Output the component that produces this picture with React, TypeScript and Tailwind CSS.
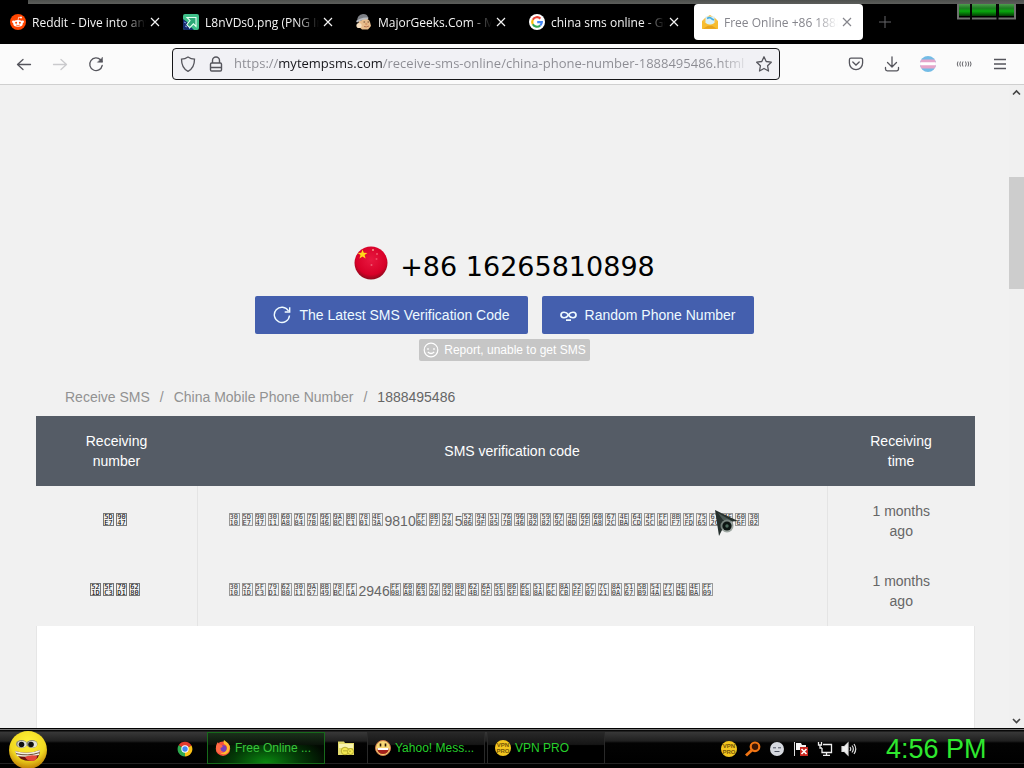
import React from "react";

const UI = "font-['Open_Sans',sans-serif]";

function CloseIcon() {
  return (
    <svg width="10" height="10" viewBox="0 0 10 10" stroke="currentColor" strokeWidth="1.2" fill="none">
      <path d="M1 1l8 8M9 1L1 9" />
    </svg>
  );
}

function RedditIcon() {
  return (
    <svg width="16" height="16" viewBox="0 0 16 16">
      <circle cx="8" cy="8" r="8" fill="#ff4500" />
      <ellipse cx="8" cy="9.4" rx="4.8" ry="3.3" fill="#fff" />
      <circle cx="3.3" cy="7.8" r="1.2" fill="#fff" />
      <circle cx="12.7" cy="7.8" r="1.2" fill="#fff" />
      <circle cx="11" cy="3.6" r="1" fill="#fff" />
      <path d="M8 6.2l.7-3 2.2.4" stroke="#fff" strokeWidth=".7" fill="none" />
      <circle cx="6.1" cy="8.8" r="1" fill="#ff4500" />
      <circle cx="9.9" cy="8.8" r="1" fill="#ff4500" />
      <path d="M6 11q2 1.2 4 0" stroke="#ff4500" strokeWidth=".7" fill="none" />
    </svg>
  );
}

function ArrowPicIcon() {
  return (
    <svg width="16" height="16" viewBox="0 0 16 16">
      <rect width="16" height="16" rx="2" fill="#3fc08a" />
      <path d="M0 5l4 3 3 4 4 4H2a2 2 0 0 1-2-2z" fill="#142a6a" />
      <path d="M4 3.5h9v9l-2.6-2.6-3.6 3.8-3-3L7 6.5z" fill="#2aa876" stroke="#e4fff2" strokeWidth="1.1" />
      <path d="M1 8l2 1M2 12l2 1M6 14l1 1" stroke="#7f9cf0" />
    </svg>
  );
}

function GeekIcon() {
  return (
    <svg width="16" height="16" viewBox="0 0 16 16">
      <path d="M3 6q9-4 11 2l1 4-3 3.500H6L2 12z" fill="#e8bd8c" />
      <path d="M1 7Q1 1 7 0q5 0 5 4-5 0-7 3z" fill="#7d8086" />
      <path d="M0 7q6-4.500 12.500-3.400l-.5 1.600Q6 5 1 8.600z" fill="#b9bcc1" />
      <path d="M7.500 8h1.600M11.500 8h1.600" stroke="#6b4a30" strokeWidth="1" />
      <path d="M8 12.500q2.500 1 5-.5" stroke="#b06a4a" strokeWidth=".9" fill="none" />
      <circle cx="3" cy="11.500" r="2.600" fill="#f6dfc0" />
      <circle cx="10.300" cy="10" r="1.200" fill="#d79b6c" />
    </svg>
  );
}

function GoogleIcon() {
  return (
    <svg width="16" height="16" viewBox="0 0 16 16">
      <circle cx="8" cy="8" r="8" fill="#fff" />
      <g fill="none" strokeWidth="2.200">
        <path d="M11.400 4.600A4.800 4.800 0 0 0 3.800 5.700" stroke="#ea4335" />
        <path d="M3.800 5.700a4.800 4.800 0 0 0 0 4.600" stroke="#fbbc05" />
        <path d="M3.800 10.300a4.800 4.800 0 0 0 7.400 1.200" stroke="#34a853" />
        <path d="M11.200 11.500A4.800 4.800 0 0 0 12.800 8.200H8.200" stroke="#4285f4" />
      </g>
    </svg>
  );
}

function EnvelopeIcon() {
  return (
    <svg width="16" height="14" viewBox="0 0 16 14">
      <path d="M0 6l3-3 5-3 5 3 3 3v8H0z" fill="#f7c145" />
      <path d="M3.500 1.500h9V8l-4.500 2.500L3.500 8z" fill="#d8f1fb" />
      <path d="M5 3.500q3-2 5 .5l2 1" stroke="#48aee0" strokeWidth="1.600" fill="none" />
      <path d="M0 6l5.500 3.500h5L16 6v6.500a1.500 1.500 0 0 1-1.500 1.500h-13A1.500 1.500 0 0 1 0 12.500z" fill="#f7bd30" />
      <path d="M1 13.800l5-3h4l5 3" fill="#e6a21c" />
    </svg>
  );
}

const tabs = [
  { title: "Reddit - Dive into anything", icon: <RedditIcon /> },
  { title: "L8nVDs0.png (PNG Image, 1024 × 768)", icon: <ArrowPicIcon /> },
  { title: "MajorGeeks.Com - MajorGeeks", icon: <GeekIcon /> },
  { title: "china sms online - Google Search", icon: <GoogleIcon /> },
  { title: "Free Online +86 1888495486", icon: <EnvelopeIcon />, active: true },
];

function TabBar() {
  return (
    <header className={`relative flex h-11 shrink-0 flex-col bg-black text-[12px] ${UI}`}>
      <div className="ml-7 h-1 shrink-0 bg-gradient-to-b from-[#4d504d] to-[#5c5e5b]" />
      <nav className="flex gap-1" aria-label="Tabs">
        {tabs.map((t) => (
          <div
            key={t.title}
            className={
              t.active
                ? "flex h-9 w-[169px] items-center rounded-[4px] bg-white px-2 text-[#85858c]"
                : "flex h-9 w-[169px] items-center px-2 text-[#f4f4f4] first:ml-0.5"
            }
          >
            <span className="flex w-[22px] shrink-0">{t.icon}</span>
            <a
              href="#tab"
              className="w-[114px] overflow-hidden pt-0.5 whitespace-nowrap [mask-image:linear-gradient(90deg,#000_80%,transparent)]"
            >
              {t.title}
            </a>
            <button aria-label={`Close ${t.title}`} className="ml-1 flex">
              <CloseIcon />
            </button>
          </div>
        ))}
        <button aria-label="New tab" className="ml-3 flex items-center text-[#66666a]">
          <svg width="12" height="12" viewBox="0 0 12 12" stroke="currentColor">
            <path d="M6 0v12M0 6h12" />
          </svg>
        </button>
      </nav>
      <svg className="absolute top-1 right-2" width="59" height="17" viewBox="0 0 59 17">
        <defs>
          <linearGradient id="bar" x2="0" y2="1">
            <stop offset="0" stopColor="#4e9c4e" />
            <stop offset=".35" stopColor="#1d7d22" />
            <stop offset=".6" stopColor="#08a70d" />
            <stop offset="1" stopColor="#033c04" />
          </linearGradient>
        </defs>
        <path d="M1 0v14.500h57V0" fill="none" stroke="#6f716f" strokeWidth="2" />
        <path d="M2 0h11v12H2zM15 0h24v12H15zM42 0h15v12H42z" fill="url(#bar)" />
        <path d="M14 0v16M40.500 0v16" stroke="#050505" strokeWidth="2" />
      </svg>
    </header>
  );
}

function Toolbar() {
  return (
    <div className={`flex h-[41px] shrink-0 items-center border-b border-[#cfcfcf] bg-[#fbfbfb] pr-4 pl-4 text-[#55555c] ${UI}`}>
      <div className="flex w-[156px] items-center gap-5">
        <button aria-label="Back">
          <svg width="16" height="16" viewBox="0 0 16 16" fill="none" stroke="currentColor" strokeWidth="1.300" strokeLinecap="round" strokeLinejoin="round">
            <path d="M14.500 8.500h-13M7 3.500l-5.500 5L7 13.500" />
          </svg>
        </button>
        <button aria-label="Forward" className="text-[#cacacd]">
          <svg width="16" height="16" viewBox="0 0 16 16" fill="none" stroke="currentColor" strokeWidth="1.300" strokeLinecap="round" strokeLinejoin="round">
            <path d="M1.500 8.500h13M9 3.500l5.500 5-5.500 5" />
          </svg>
        </button>
        <button aria-label="Reload">
          <svg width="16" height="16" viewBox="0 0 16 16" fill="none" stroke="currentColor" strokeWidth="1.300" strokeLinecap="round">
            <path d="M14.200 9.500A6.300 6.300 0 1 1 12.700 4L14 5.500" />
            <path d="M14.500 1.500v4.800H9.700z" fill="currentColor" strokeWidth=".5" />
          </svg>
        </button>
      </div>
      <div className="flex h-8 min-w-0 flex-[608] items-center rounded-[4px] border border-[#151518] bg-[#f1f1f5] px-[7px]">
        <svg width="16" height="16" viewBox="0 0 16 16" fill="none" stroke="currentColor" strokeWidth="1.300" className="shrink-0">
          <path d="M8 1q3 2 6.500 2.200Q14.500 12 8 15.300 1.500 12 1.500 3.200 5 3 8 1z" />
        </svg>
        <svg width="16" height="16" viewBox="0 0 16 16" fill="none" stroke="currentColor" strokeWidth="1.400" className="ml-3 shrink-0">
          <rect x="2.500" y="7" width="11" height="8" rx="1.200" />
          <path d="M4.500 7V4.500a3.500 3.500 0 0 1 7 0V7M3 11.500h10" />
        </svg>
        <input
          aria-label="Address"
          readOnly
          value="https://mytempsms.com/receive-sms-online/china-phone-number-1888495486.html"
          className="ml-[10px] min-w-0 flex-1 bg-[linear-gradient(90deg,#8b8b92_0_45px,#17171c_45px_148px,#8b8b92_148px_485px,transparent_516px)] bg-clip-text text-[13px] text-transparent outline-none"
        />
        <button aria-label="Bookmark" className="ml-2 shrink-0">
          <svg width="16" height="16" viewBox="0 0 16 16" fill="none" stroke="currentColor" strokeWidth="1.300" strokeLinejoin="round">
            <path d="M8 .8l2.200 4.700 5.100.7-3.700 3.600.9 5.200L8 12.500 3.500 15l.9-5.200L.7 6.200l5.100-.7z" />
          </svg>
        </button>
      </div>
      <div className="flex min-w-[228px] flex-[228] items-center justify-end gap-5">
        <button aria-label="Save to Pocket">
          <svg width="16" height="16" viewBox="0 0 16 16" fill="none" stroke="currentColor" strokeWidth="1.300" strokeLinecap="round">
            <path d="M3 2.200h10a1.600 1.600 0 0 1 1.600 1.600V7a6.600 6.600 0 0 1-13.200 0V3.800A1.600 1.600 0 0 1 3 2.200z" />
            <path d="M4.800 6L8 9l3.200-3" />
          </svg>
        </button>
        <button aria-label="Downloads">
          <svg width="16" height="16" viewBox="0 0 16 16" fill="none" stroke="currentColor" strokeWidth="1.300" strokeLinecap="round" strokeLinejoin="round">
            <path d="M8 .8v10M3.500 6.500L8 11l4.500-4.500M1.500 11.500V13A1.800 1.800 0 0 0 3.300 14.800h9.400A1.800 1.800 0 0 0 14.500 13v-1.500" />
          </svg>
        </button>
        <button aria-label="Profile">
          <svg width="16" height="16" viewBox="0 0 16 16">
            <clipPath id="disc"><circle cx="8" cy="8" r="8" /></clipPath>
            <g clipPath="url(#disc)">
              <path fill="#73bce6" d="M0 0h16v16H0z" />
              <path fill="#e6a5ca" d="M0 3.400h16v9H0z" />
              <path fill="#fff" d="M0 6.300h16v3H0z" />
            </g>
          </svg>
        </button>
        <button aria-label="Sound extension">
          <svg width="16" height="16" viewBox="0 0 16 16" fill="none" stroke="#66666b" strokeWidth="1">
            <path d="M2 5.500q-1.500 2.500 0 5M4.500 5.500q-1.500 2.500 0 5M7 5.500q-1.500 2.500 0 5M9.500 5.500q1.500 2.500 0 5M12 5.500q1.500 2.500 0 5M14.300 5.500q1.500 2.500 0 5" />
          </svg>
        </button>
        <button aria-label="Menu">
          <svg width="16" height="16" viewBox="0 0 16 16" stroke="currentColor" strokeWidth="1.300">
            <path d="M2 3.500h12M2 8h12M2 12.500h12" />
          </svg>
        </button>
      </div>
    </div>
  );
}

/* Shows every non-Latin character as a box holding its code point in hex. */
function CodeBoxes({ text, strong = false }: { text: string; strong?: boolean }) {
  return (
    <span className={strong ? "flex h-6 items-start justify-center pt-1" : "flex h-6 items-start pt-1"}>
      {Array.from(text).map((ch, i) => {
        const code = ch.codePointAt(0) ?? 0;
        if (code < 128) {
          return (
            <span key={i} className="leading-4">
              {ch}
            </span>
          );
        }
        return (
          <span
            key={i}
            className={`mr-0.5 flex h-[13px] w-[11px] items-center justify-center border font-['DejaVu_Sans_Mono',monospace] text-[7px] leading-[6px] ${
              strong ? "border-[#777] text-black" : "border-[#999] text-[#333]"
            }`}
          >
            <span className="w-[9px] text-left break-all whitespace-normal">
              {code.toString(16).toUpperCase()}
            </span>
          </span>
        );
      })}
    </span>
  );
}

const messages = [
  {
    from: "巧遇",
    body: "【巧遇】您的登陆验证码为9810，请在5分钟内登陆。如果不是您本人操作，请忽略本信息。",
  },
  {
    from: "初心科技",
    body: "【初心科技】驗證碼：2946（您正在進行手機帳號注冊，請勿將簡訊內容告知他人）",
  },
];

function FlagBall() {
  return (
    <svg width="34" height="34" viewBox="0 0 34 34">
      <defs>
        <radialGradient id="ball" cx=".5" cy=".4" r=".6">
          <stop offset="0" stopColor="#e81840" />
          <stop offset=".75" stopColor="#d80028" />
          <stop offset="1" stopColor="#8c0a1c" />
        </radialGradient>
      </defs>
      <circle cx="17" cy="17" r="16.500" fill="url(#ball)" />
      <path d="M8.500 3.500l1.300 3.300 3.600.1-2.800 2.200 1 3.500-3.100-2-3 2 1-3.500-2.800-2.200 3.600-.1z" fill="#ffda1a" />
      <circle cx="19" cy="4" r="1" fill="#f59a8a" />
      <circle cx="23" cy="8" r="1" fill="#f0566a" />
      <circle cx="22.500" cy="13" r="1" fill="#ee4c62" />
      <circle cx="17.500" cy="19" r="1" fill="#ee5a70" />
    </svg>
  );
}

function Page() {
  return (
    <main className="flex min-w-0 flex-1 flex-col overflow-hidden pr-[34px] pl-9 font-['Liberation_Sans',Arial,sans-serif] text-[14px] leading-5">
      <section className="flex flex-col items-center pt-[161px] pr-0.5">
        <div className="flex h-[35px] items-start gap-3">
          <FlagBall />
          <h1 className="pt-[5px] font-['DejaVu_Sans',sans-serif] text-[27px] leading-8 text-black">+86 16265810898</h1>
        </div>
        <div className="mt-[15px] flex gap-[14px] text-[#eefaff]">
          <button className="flex h-[38px] items-center gap-2 rounded-[2px] bg-[#445fae] px-[18px]">
            <svg width="18" height="18" viewBox="0 0 18 18" fill="none" stroke="currentColor" strokeWidth="1.400">
              <path d="M16.500 9.500A7.600 7.600 0 1 1 15.500 5M16.700 1.200V6h-5" />
            </svg>
            The Latest SMS Verification Code
          </button>
          <button className="flex h-[38px] items-center gap-2 rounded-[2px] bg-[#445fae] px-[18px]">
            <svg width="17" height="18" viewBox="0 0 17 18" fill="none" stroke="currentColor" strokeWidth="1.700">
              <path d="M8.500 9C6 5 1 5.700 1 9s5 4 7.500 0 7.500-3.300 7.500 0-5 4-7.500 0zM6 14.200h5" />
            </svg>
            Random Phone Number
          </button>
        </div>
        <button className="mt-[5px] flex h-[22px] items-center gap-[5px] rounded-[2px] bg-[#c6c6c6] px-1 text-[12px] text-white">
          <svg width="16" height="16" viewBox="0 0 16 16" fill="none" stroke="currentColor" strokeWidth="1.200">
            <circle cx="8" cy="8" r="6.800" />
            <path d="M5 6v2M11 6v2M4.800 10q3.200 3 6.400 0" />
          </svg>
          Report, unable to get SMS
        </button>
      </section>
      <nav aria-label="Breadcrumb" className="mt-[26px] flex gap-[10px] pl-[29px] text-[#929292]">
        <a href="#receive">Receive SMS</a>
        <span>/</span>
        <a href="#china">China Mobile Phone Number</a>
        <span>/</span>
        <span className="text-[#666]">1888495486</span>
      </nav>
      <div className="mt-[9px] flex-1 border-r border-l border-[#e6e6e6] bg-white">
        <table className="-mx-px w-[calc(100%+2px)] table-fixed border-collapse bg-[#f1f1f1] text-[#666]">
          <colgroup>
            <col className="w-[161px]" />
            <col />
            <col className="w-[148px]" />
          </colgroup>
          <thead className="bg-[#555c66] text-white">
            <tr className="h-[70px]">
              <th className="px-10 py-0 font-normal">Receiving number</th>
              <th className="px-10 py-0 font-normal">SMS verification code</th>
              <th className="px-10 py-0 font-normal">Receiving time</th>
            </tr>
          </thead>
          <tbody>
            {messages.map((m) => (
              <tr key={m.from} className="h-[70px]">
                <td className="border-r border-[#e4e4e4] p-0 text-center">
                  <a href="#sender" className="block">
                    <CodeBoxes text={m.from} strong />
                  </a>
                </td>
                <td className="border-r border-[#e4e4e4] py-0 pl-[31px] whitespace-nowrap">
                  <CodeBoxes text={m.body} />
                </td>
                <td className="px-10 py-0 text-center">1 months ago</td>
              </tr>
            ))}
          </tbody>
        </table>
      </div>
    </main>
  );
}

function Scrollbar() {
  return (
    <div className="flex w-[15px] shrink-0 flex-col items-center bg-[#f0f0f0] text-[#444]" aria-hidden="true">
      <svg width="15" height="15" viewBox="0 0 15 15" fill="none" stroke="currentColor" strokeWidth="1.600">
        <path d="M4 9.500L7.500 6 11 9.500" />
      </svg>
      <div className="flex-[77]" />
      <div className="w-full flex-[112] bg-[#cdcdcd]" />
      <div className="flex-[424]" />
      <svg width="15" height="15" viewBox="0 0 15 15" fill="none" stroke="currentColor" strokeWidth="1.600">
        <path d="M4 6l3.500 3.500L11 6" />
      </svg>
    </div>
  );
}

function Pointer() {
  return (
    <svg className="pointer-events-none absolute top-[508px] left-[713px]" width="26" height="30" viewBox="0 0 26 30">
      <path d="M2 2L25 13 13 14 6 28z" fill="#26302d" />
      <path d="M5 5l14 8-9-1z" fill="#4b5854" />
      <circle cx="14" cy="18" r="6.500" fill="#8a958f" opacity=".8" />
      <circle cx="14" cy="18" r="4.600" fill="#0d1512" />
      <circle cx="14" cy="18" r="1.700" fill="#4d6a5c" />
    </svg>
  );
}

function StartFace() {
  return (
    <svg width="38" height="38" viewBox="0 0 38 38">
      <defs>
        <radialGradient id="face" cx=".5" cy=".3" r=".7">
          <stop offset="0" stopColor="#fff23a" />
          <stop offset=".65" stopColor="#f0d820" />
          <stop offset="1" stopColor="#c07e05" />
        </radialGradient>
      </defs>
      <circle cx="19" cy="19" r="19" fill="url(#face)" />
      <ellipse cx="12.500" cy="13" rx="5.500" ry="4" fill="#8a8a78" />
      <ellipse cx="23" cy="13" rx="5.500" ry="4" fill="#8a8a78" />
      <ellipse cx="13" cy="13.300" rx="4.500" ry="3.300" fill="#e4e4d8" />
      <ellipse cx="23.500" cy="13.300" rx="4.500" ry="3.300" fill="#e4e4d8" />
      <circle cx="12.500" cy="13.500" r="2.800" fill="#111" />
      <circle cx="22" cy="13.500" r="2.800" fill="#111" />
      <path d="M6 20q13 4 25-1 0 10-9 11Q9 30 6 20z" fill="#69110c" />
      <path d="M6 20q13 4 25-1l-1 5q-11 3-22 1z" fill="#f3f0de" />
      <path d="M16 26q6-3 12-1 0 5-5 5-5 0-7-4z" fill="#e4473a" />
      <path d="M7 22.600q12 3 23.500-1" stroke="#5a3a23" strokeWidth=".9" fill="none" />
    </svg>
  );
}

function ChromeIcon() {
  return (
    <svg width="16" height="16" viewBox="0 0 16 16">
      <path d="M8 8L1.600 4.200A7.500 7.500 0 0 1 14.500 4.500z" fill="#e33b2e" />
      <path d="M8 8l6.500-3.500A7.500 7.500 0 0 1 8 15.500z" fill="#fbc116" />
      <path d="M8 8v7.500A7.500 7.500 0 0 1 1.600 4.200z" fill="#2da94f" />
      <circle cx="8" cy="8" r="3.700" fill="#fff" />
      <circle cx="8" cy="8" r="2.700" fill="#4285f4" />
    </svg>
  );
}

function FirefoxIcon() {
  return (
    <svg width="16" height="16" viewBox="0 0 16 16">
      <circle cx="8" cy="8.700" r="7.200" fill="#f5503c" />
      <path d="M9 0q4 2.500 5.700 6 .8 5-3.700 8-4 1-6-1 6 0 7-5 0-3-3-4-1-2 0-4z" fill="#ffbd2e" />
      <circle cx="8.200" cy="8.600" r="3.400" fill="#7540bd" />
      <path d="M1 7q0-3 2-5 0 2 2 2.500Q8 5 7.500 7L5.500 8q0 4 4 4-5 3-8-1z" fill="#ff6b45" />
    </svg>
  );
}

function FolderIcon() {
  return (
    <svg width="16" height="16" viewBox="0 0 16 16">
      <path d="M0 1.500h6l1 1.500h9v12H0z" fill="#e4dc6c" />
      <path d="M1 4h14v4H1z" fill="#f8f4b0" />
      <circle cx="7" cy="11" r="3.800" fill="#f2e850" stroke="#a99c22" strokeWidth=".8" />
      <circle cx="12.500" cy="11.500" r="3" fill="#f2e850" stroke="#a99c22" strokeWidth=".8" />
      <path d="M6 10v1.500M8 10v1.500M12 10.500V12" stroke="#8e8418" strokeWidth=".8" />
    </svg>
  );
}

function YahooFace() {
  return (
    <svg width="16" height="16" viewBox="0 0 16 16">
      <circle cx="8" cy="8" r="7.500" fill="#f7d774" stroke="#cf7a4d" />
      <path d="M2 8h12q-.5 6-6 6T2 8z" fill="#a3201b" />
      <path d="M2.300 8h11.400l-.5 2H2.800z" fill="#fff" />
      <path d="M5.500 3.500v3M10.500 3.500v3" stroke="#2c1808" strokeWidth="1.600" />
    </svg>
  );
}

function VpnCoin() {
  return (
    <span className="flex size-4 flex-col items-center justify-center rounded-full bg-[#f3c51f] text-[6px] leading-[6px] font-bold text-[#755608]">
      <span>VPN</span>
      <span>PRO</span>
    </span>
  );
}

function TaskButton({ icon, label, active = false }: { icon: React.ReactNode; label: string; active?: boolean }) {
  return (
    <button
      className={
        active
          ? "flex h-8 w-[118px] items-center gap-1 border border-[#176a1b] bg-[linear-gradient(#1b301b_0,#0a140a_38%,transparent_42%),radial-gradient(ellipse_at_bottom,#0a8a10_0%,#043c07_40%,#020a02_75%)] px-[7px] text-[#39c43c]"
          : "flex h-8 w-[118px] items-center gap-1 border border-[#292929] bg-[linear-gradient(#272727_0,#161616_38%,#000_42%)] px-[7px] text-[#27cf2c]"
      }
    >
      {icon}
      {label}
    </button>
  );
}

function Taskbar() {
  return (
    <footer className="flex h-10 shrink-0 items-center overflow-hidden border-t border-black bg-[linear-gradient(#777_0_1px,#080808_1px_2px,#383838_3px,#202020_12px,#030303_14px,#000_34px,#222_34px_35px,#000_35px)] pl-[9px] font-['Liberation_Sans',Arial,sans-serif] text-[12px]">
      <button aria-label="Start" className="mt-0.5">
        <StartFace />
      </button>
      <a href="#chrome" aria-label="Chrome" className="ml-[130px]">
        <ChromeIcon />
      </a>
      <div className="ml-[14px] flex items-center gap-0.5 pb-0.5">
        <TaskButton icon={<FirefoxIcon />} label="Free Online ..." active />
        <a href="#folder" aria-label="Folder" className="mx-[11px]">
          <FolderIcon />
        </a>
        <TaskButton icon={<YahooFace />} label="Yahoo! Mess..." />
        <TaskButton icon={<VpnCoin />} label="VPN PRO" />
      </div>
      <div className="ml-auto flex items-center gap-2">
        <VpnCoin />
        <svg width="16" height="16" viewBox="0 0 16 16" fill="none" stroke="#ef7414" strokeWidth="2.200">
          <circle cx="10" cy="5.800" r="4.300" fill="#3a1604" />
          <path d="M7 9l-6 5.500" strokeWidth="3" />
        </svg>
        <svg width="16" height="16" viewBox="0 0 16 16" fill="none">
          <circle cx="8" cy="8" r="7" fill="#d6d9df" />
          <path d="M4 6.800h3M9 6.800h3M5.500 10.500h5" stroke="#4d5260" />
        </svg>
        <svg width="16" height="16" viewBox="0 0 16 16" fill="none">
          <path d="M1.500 1v14" stroke="#ddd" />
          <path d="M3 2h5l1 2h4v5H3z" fill="#f4f4f4" />
          <path d="M7 6h8v9H7z" fill="#c9251d" />
          <path d="M8.500 8l5 5M13.500 8l-5 5" stroke="#fff" strokeWidth="1.600" />
        </svg>
        <svg width="16" height="16" viewBox="0 0 16 16" fill="none" stroke="#eee" strokeWidth="1.300">
          <path d="M6 3.500h8.500v8H5V7M9.500 11.500V14M6 14.300h7M1.500 1v3h3V1M3 4v3h2" />
        </svg>
        <svg width="16" height="16" viewBox="0 0 16 16" fill="none" stroke="#ddd" strokeWidth="1.200">
          <path d="M1 5.500h2.500L7 2v12l-3.500-3.500H1z" fill="#f1f1f1" />
          <path d="M9 6q1.500 2 0 4M11 4.500q2.700 3.500 0 7M13 3q3.500 5 0 10" />
        </svg>
      </div>
      <time className="ml-[29px] w-[138px] text-[27px]/[36px] text-[#2fe82f]">4:56 PM</time>
    </footer>
  );
}

export default function App() {
  return (
    <div className="relative flex h-screen flex-col overflow-hidden bg-[#f1f1f1]">
      <TabBar />
      <Toolbar />
      <div className="flex min-h-0 flex-1">
        <Page />
        <Scrollbar />
      </div>
      <Taskbar />
      <Pointer />
    </div>
  );
}
